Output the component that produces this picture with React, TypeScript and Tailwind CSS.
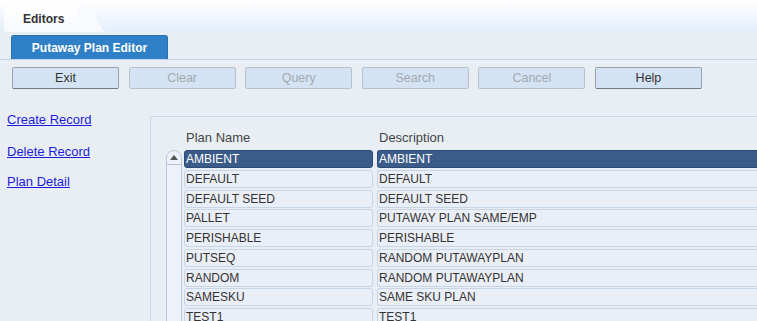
const buttons = [
  { label: "Exit", enabled: true },
  { label: "Clear", enabled: false },
  { label: "Query", enabled: false },
  { label: "Search", enabled: false },
  { label: "Cancel", enabled: false },
  { label: "Help", enabled: true },
];

const rows = [
  ["AMBIENT", "AMBIENT"],
  ["DEFAULT", "DEFAULT"],
  ["DEFAULT SEED", "DEFAULT SEED"],
  ["PALLET", "PUTAWAY PLAN SAME/EMP"],
  ["PERISHABLE", "PERISHABLE"],
  ["PUTSEQ", "RANDOM PUTAWAYPLAN"],
  ["RANDOM", "RANDOM PUTAWAYPLAN"],
  ["SAMESKU", "SAME SKU PLAN"],
  ["TEST1", "TEST1"],
];

export default function App() {
  return (
    <div className="w-[757px] h-[321px] overflow-hidden bg-[#e9eef5] font-['Liberation_Sans',Arial,sans-serif] text-[#333]">
      {/* top strip with Editors tab */}
      <div className="h-[32px] bg-gradient-to-b from-white to-[#e4eefa] flex items-end pl-[4px]">
        <div className="flex items-end">
          <div className="h-[27px] w-[74px] rounded-tl-[6px] bg-gradient-to-b from-white to-[#f6f9fd] flex items-center pl-[19px] text-[12px] font-bold text-[#333]">
            Editors
          </div>
          <svg width="28" height="27" viewBox="0 0 28 27" className="block">
            <path d="M0 0 H6 C14 0 16 10 22 20 C24 24 26 26 28 27 H0 Z" fill="#f8fafd" />
          </svg>
        </div>
      </div>

      {/* editor tab bar */}
      <div className="pl-[11px] pt-[3px] border-b border-[#c6d6e8]">
        <div className="w-[157px] h-[24px] rounded-t-[3px] bg-[#2f80c6] border border-[#2a72b2] border-b-0 flex items-center justify-center text-[12px] font-bold text-white">
          Putaway Plan Editor
        </div>
      </div>

      {/* buttons */}
      <div className="flex gap-[9.6px] pl-[12px] pt-[7px]">
        {buttons.map((b) => (
          <button
            key={b.label}
            className={
              b.enabled
                ? "w-[107px] h-[22px] rounded-[2px] bg-[#d4e3f3] border border-[#9aa3ad] border-b-[#6f7b88] text-[12.5px] text-[#333] leading-none"
                : "w-[107px] h-[22px] rounded-[2px] bg-[#d4e3f3] border border-[#b9c2cc] text-[12.5px] text-[#a3a9b0] leading-none"
            }
          >
            {b.label}
          </button>
        ))}
      </div>

      {/* main area */}
      <div className="flex">
        <div className="w-[150px] flex flex-col items-start pl-[7px] pt-[23px] text-[13px] leading-[16px]">
          <a href="#" className="text-[#1c1cd8] underline">Create Record</a>
          <a href="#" className="mt-[16px] text-[#1c1cd8] underline">Delete Record</a>
          <a href="#" className="mt-[14px] text-[#1c1cd8] underline">Plan Detail</a>
        </div>

        <div className="flex-1 mt-[27px] border-t border-l border-[#c8d7e9] pl-[15px] pt-[13px]">
          <div className="flex pl-[20px] text-[13px] text-[#444] leading-[16px] h-[19px]">
            <div className="w-[193px]">Plan Name</div>
            <div>Description</div>
          </div>
          <div className="flex gap-[2px] pt-[1px]">
            {/* scrollbar */}
            <div className="w-[16px] h-[190px] rounded-t-[8px] border border-[#bccadb] bg-[#eef2f8] flex flex-col">
              <div className="h-[14px] border-b border-[#b3c0cf] flex items-center justify-center">
                <svg width="8" height="5" viewBox="0 0 8 5">
                  <path d="M0 5 L4 0 L8 5 Z" fill="#555" />
                </svg>
              </div>
            </div>
            <div className="flex-1 flex flex-col gap-[1.75px] text-[12px] leading-none">
              {rows.map((r, i) => {
                const sel = i === 0;
                return (
                  <div key={i} className="flex gap-[4px] h-[18px]">
                    <div
                      className={
                        sel
                          ? "w-[189px] rounded-[3px] bg-[#3b5b89] border border-[#2e4b77] text-white flex items-center pl-[1px]"
                          : "w-[189px] rounded-[3px] bg-[#eaeef6] border border-[#c6d5e8] flex items-center pl-[1px]"
                      }
                    >
                      {r[0]}
                    </div>
                    <div
                      className={
                        sel
                          ? "flex-1 rounded-l-[3px] bg-[#3b5b89] border border-r-0 border-[#2e4b77] text-white flex items-center pl-[1px]"
                          : "flex-1 rounded-l-[3px] bg-[#eaeef6] border border-r-0 border-[#c6d5e8] flex items-center pl-[1px]"
                      }
                    >
                      {r[1]}
                    </div>
                  </div>
                );
              })}
            </div>
          </div>
        </div>
      </div>
    </div>
  );
}
